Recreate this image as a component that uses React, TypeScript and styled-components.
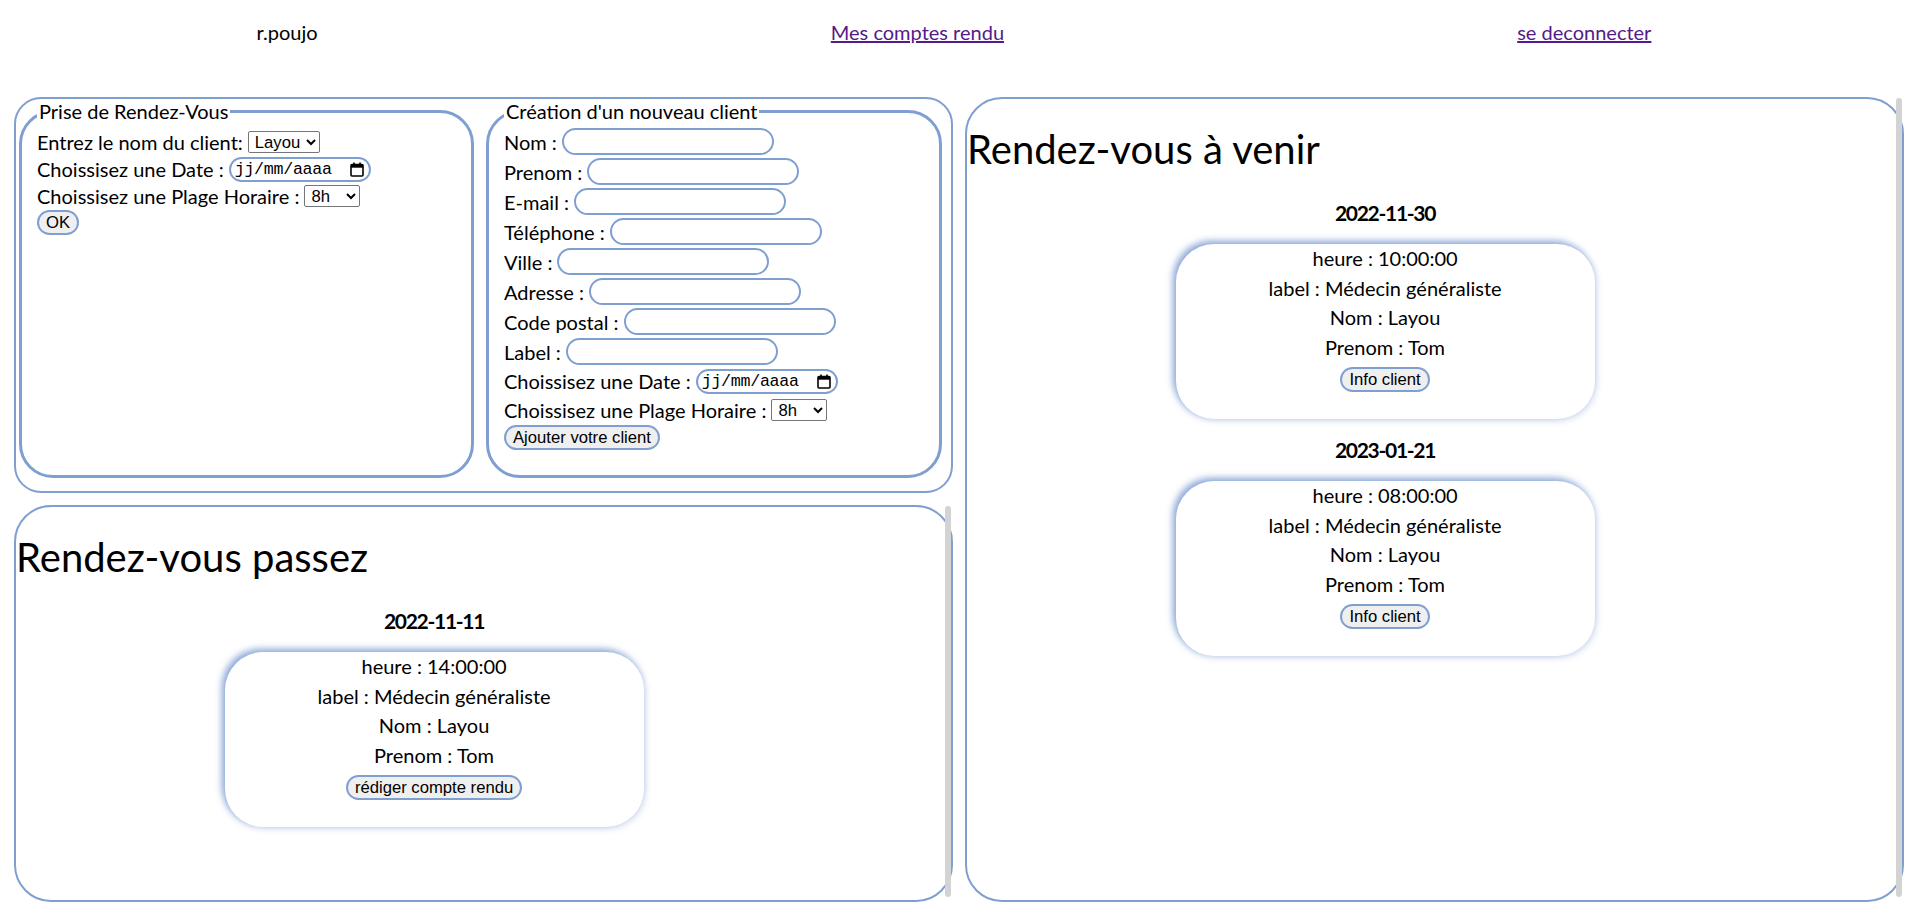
import React from "react";
import styled, { createGlobalStyle } from "styled-components";

const BLUE = "#7f9fd1";

const GlobalStyle = createGlobalStyle`
  html, body {
    margin: 0;
    padding: 0;
    height: 100%;
    overflow: hidden;
    background: #fff;
  }
  body {
    font-family: Lato, "Liberation Sans", sans-serif;
    font-size: 20px;
    color: #000;
  }
  *, *::before, *::after { box-sizing: border-box; }
`;

const Header = styled.header`
  display: flex;
  justify-content: space-around;
  align-items: center;
  height: 64px;
`;

const UserName = styled.span`
  font-size: 20px;
`;

const NavLink = styled.a`
  color: #551a8b;
  text-decoration: underline;
  font-size: 20px;
`;

const Main = styled.main`
  display: grid;
  grid-template-columns: 939px 939px;
  grid-template-rows: 396px 397px;
  gap: 12px;
  padding: 33px 0 0 14px;
`;

const FormsBox = styled.section`
  grid-column: 1;
  grid-row: 1;
  border: 2px solid ${BLUE};
  border-radius: 27px;
  display: flex;
  align-items: flex-start;
  gap: 8px;
  padding: 0 0 0 1px;
`;

const Fieldset = styled.fieldset<{ $w: number }>`
  margin: 0 2px;
  width: ${(p) => p.$w}px;
  height: 379px;
  border: 3px solid ${BLUE};
  border-radius: 34px;
  padding: 5px 15px 12px;
  min-inline-size: 0;
`;

const Legend = styled.legend`
  padding: 0 2px;
  font-size: 20px;
  line-height: 24px;
`;

const FieldStack = styled.div<{ $gap: number }>`
  display: flex;
  flex-direction: column;
  align-items: flex-start;
  gap: ${(p) => p.$gap}px;
`;

const FieldRow = styled.div<{ $h: number }>`
  display: flex;
  align-items: center;
  gap: 5px;
  height: ${(p) => p.$h}px;
  white-space: nowrap;
`;

const FieldLabel = styled.label`
  font-size: 20px;
  line-height: 24px;
`;

const TextInput = styled.input`
  width: 212px;
  height: 27px;
  border: 2px solid ${BLUE};
  border-radius: 14px;
  padding: 0 10px;
  font: 16.67px "Liberation Sans", Arial, sans-serif;
  background: #fff;
  outline: none;
`;

const Select = styled.select`
  height: 22px;
  font: 16.67px "Liberation Sans", Arial, sans-serif;
  color: #000;
  border: 1px solid #767676;
  border-radius: 2px;
  background: #fff;
  padding: 0 2px;
`;

const DateField = styled.span`
  display: inline-flex;
  align-items: center;
  justify-content: space-between;
  width: 142px;
  height: 25px;
  border: 2px solid ${BLUE};
  border-radius: 13px;
  padding: 0 5px 0 4px;
  font: 16.67px "Liberation Mono", "DejaVu Sans Mono", monospace;
  color: #000;
`;

const DateText = styled.span`
  letter-spacing: -0.3px;
`;

const Button = styled.button`
  height: 25px;
  padding: 0 7px;
  border: 2px solid ${BLUE};
  border-radius: 13px;
  background: #efefef;
  color: #000;
  font: 16.67px "Liberation Sans", Arial, sans-serif;
  white-space: nowrap;
  cursor: pointer;
`;

const ListPanel = styled.section<{ $col: number; $row: string }>`
  position: relative;
  grid-column: ${(p) => p.$col};
  grid-row: ${(p) => p.$row};
  border: 2px solid ${BLUE};
  border-radius: 37px;
  padding-right: 6px;

  &::after {
    content: "";
    position: absolute;
    top: -1px;
    bottom: 3px;
    right: 0;
    width: 6px;
    border-radius: 3px;
    background: #d3d3d3;
  }
`;

const PanelTitle = styled.h1`
  margin: 26px 0 26px;
  font-size: 40px;
  font-weight: 400;
  line-height: 48px;
  white-space: nowrap;
`;

const AppointmentList = styled.div`
  width: 90%;
  display: flex;
  flex-direction: column;
  align-items: center;
  gap: 17px;
`;

const DateHeading = styled.h3`
  margin: 0;
  font-size: 21px;
  font-weight: 700;
  line-height: 28px;
  letter-spacing: -1.3px;
`;

const Card = styled.div`
  flex-shrink: 0;
  width: 419px;
  height: 175px;
  border-radius: 38px;
  background: #fff;
  box-shadow: -3px -3px 7px rgba(110, 145, 205, 0.8),
    2px 2px 6px rgba(110, 145, 205, 0.25);
  display: flex;
  flex-direction: column;
  align-items: center;
  padding-top: 0;
`;

const CardLine = styled.div`
  line-height: 29.5px;
  font-size: 20px;
  white-space: nowrap;
`;

const CardButton = styled(Button)`
  margin-top: 5px;
`;

const CalendarIcon = () => (
  <svg width="14" height="15" viewBox="0 0 14 15" aria-hidden="true">
    <rect x="1" y="2.5" width="12" height="11.5" rx="1" fill="none" stroke="#000" strokeWidth="1.6" />
    <rect x="1" y="2.5" width="12" height="3.2" fill="#000" />
    <rect x="3.2" y="0.5" width="1.6" height="3" fill="#000" />
    <rect x="9.2" y="0.5" width="1.6" height="3" fill="#000" />
  </svg>
);

const DateInput = () => (
  <DateField>
    <DateText>jj/mm/aaaa</DateText>
    <CalendarIcon />
  </DateField>
);

const HourSelect = () => (
  <Select defaultValue="8h" style={{ width: 56 }}>
    <option>8h</option>
    <option>9h</option>
    <option>10h</option>
    <option>11h</option>
    <option>14h</option>
    <option>15h</option>
    <option>16h</option>
  </Select>
);

type Appointment = {
  date: string;
  heure: string;
  label: string;
  nom: string;
  prenom: string;
};

const past: Appointment[] = [
  { date: "2022-11-11", heure: "14:00:00", label: "Médecin généraliste", nom: "Layou", prenom: "Tom" },
];

const upcoming: Appointment[] = [
  { date: "2022-11-30", heure: "10:00:00", label: "Médecin généraliste", nom: "Layou", prenom: "Tom" },
  { date: "2023-01-21", heure: "08:00:00", label: "Médecin généraliste", nom: "Layou", prenom: "Tom" },
];

const clientFields = [
  "Nom",
  "Prenom",
  "E-mail",
  "Téléphone",
  "Ville",
  "Adresse",
  "Code postal",
  "Label",
];

const AppointmentCards = ({ items, action }: { items: Appointment[]; action: string }) => (
  <AppointmentList>
    {items.map((a) => (
      <React.Fragment key={a.date}>
        <DateHeading>{a.date}</DateHeading>
        <Card>
          <CardLine>heure : {a.heure}</CardLine>
          <CardLine>label : {a.label}</CardLine>
          <CardLine>Nom : {a.nom}</CardLine>
          <CardLine>Prenom : {a.prenom}</CardLine>
          <CardButton>{action}</CardButton>
        </Card>
      </React.Fragment>
    ))}
  </AppointmentList>
);

export default function App() {
  return (
    <>
      <GlobalStyle />
      <Header>
        <UserName>r.poujo</UserName>
        <NavLink href="#">Mes comptes rendu</NavLink>
        <NavLink href="#">se deconnecter</NavLink>
      </Header>
      <Main>
        <FormsBox>
          <Fieldset $w={455}>
            <Legend>Prise de Rendez-Vous</Legend>
            <FieldStack $gap={0}>
              <FieldRow $h={28}>
                <FieldLabel>Entrez le nom du client:</FieldLabel>
                <Select defaultValue="Layou">
                  <option>Layou</option>
                </Select>
              </FieldRow>
              <FieldRow $h={26}>
                <FieldLabel>Choissisez une Date :</FieldLabel>
                <DateInput />
              </FieldRow>
              <FieldRow $h={28}>
                <FieldLabel>Choissisez une Plage Horaire :</FieldLabel>
                <HourSelect />
              </FieldRow>
              <Button>OK</Button>
            </FieldStack>
          </Fieldset>
          <Fieldset $w={456}>
            <Legend>Création d'un nouveau client</Legend>
            <FieldStack $gap={3}>
              {clientFields.map((f) => (
                <FieldRow $h={27} key={f}>
                  <FieldLabel>{f} :</FieldLabel>
                  <TextInput type="text" />
                </FieldRow>
              ))}
              <FieldRow $h={26}>
                <FieldLabel>Choissisez une Date :</FieldLabel>
                <DateInput />
              </FieldRow>
              <FieldRow $h={25}>
                <FieldLabel>Choissisez une Plage Horaire :</FieldLabel>
                <HourSelect />
              </FieldRow>
              <Button>Ajouter votre client</Button>
            </FieldStack>
          </Fieldset>
        </FormsBox>
        <ListPanel $col={1} $row="2">
          <PanelTitle>Rendez-vous passez</PanelTitle>
          <AppointmentCards items={past} action="rédiger compte rendu" />
        </ListPanel>
        <ListPanel $col={2} $row="1 / span 2">
          <PanelTitle>Rendez-vous à venir</PanelTitle>
          <AppointmentCards items={upcoming} action="Info client" />
        </ListPanel>
      </Main>
    </>
  );
}
